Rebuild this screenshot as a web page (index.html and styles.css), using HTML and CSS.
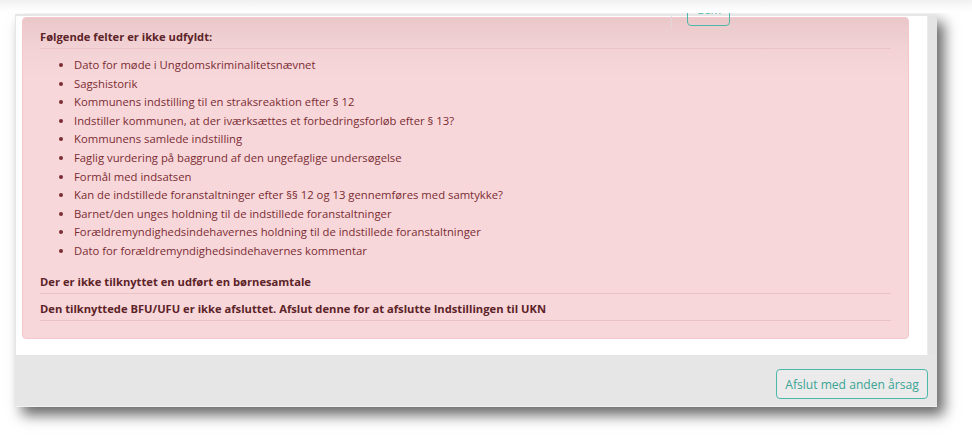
FILE: index.html
```html
<!DOCTYPE html>
<html lang="da">
<head>
<meta charset="utf-8">
<title>Indstilling til UKN</title>
<link rel="stylesheet" href="styles.css">
</head>
<body>
<div class="stage">
  <div class="window">
    <div class="content">
      <div class="main">
        <div class="cutoff">
          <span class="cut-label">Gældende</span>
          <span class="cut-divider"></span>
          <span class="cut-button">Gem</span>
        </div>
        <div class="alert">
          <div class="alert-title">Følgende felter er ikke udfyldt:</div>
          <ul class="missing">
            <li>Dato for møde i Ungdomskriminalitetsnævnet</li>
            <li>Sagshistorik</li>
            <li>Kommunens indstilling til en straksreaktion efter § 12</li>
            <li>Indstiller kommunen, at der iværksættes et forbedringsforløb efter § 13?</li>
            <li>Kommunens samlede indstilling</li>
            <li>Faglig vurdering på baggrund af den ungefaglige undersøgelse</li>
            <li>Formål med indsatsen</li>
            <li>Kan de indstillede foranstaltninger efter §§ 12 og 13 gennemføres med samtykke?</li>
            <li>Barnet/den unges holdning til de indstillede foranstaltninger</li>
            <li>Forældremyndighedsindehavernes holdning til de indstillede foranstaltninger</li>
            <li>Dato for forældremyndighedsindehavernes kommentar</li>
          </ul>
          <div class="alert-title gap">Der er ikke tilknyttet en udført en børnesamtale</div>
          <div class="alert-title tight">Den tilknyttede BFU/UFU er ikke afsluttet. Afslut denne for at afslutte Indstillingen til UKN</div>
        </div>
      </div>
      <div class="scrollbar"></div>
    </div>
    <div class="footer">
      <button class="btn-outline" type="button">Afslut med anden årsag</button>
    </div>
  </div>
</div>
<div class="top-fade"></div>
</body>
</html>
```
FILE: styles.css
```css
html, body {
  margin: 0;
  padding: 0;
  background: #ffffff;
}

body {
  position: relative;
  font-family: "Open Sans", "Liberation Sans", sans-serif;
  width: 972px;
  height: 443px;
  overflow: hidden;
}

.top-fade {
  position: absolute;
  top: 0;
  left: 0;
  width: 972px;
  height: 13px;
  background: linear-gradient(to bottom, #f1f1f1 0px, #fbfbfb 8px, #ffffff 13px);
  z-index: 10;
}

.stage {
  padding: 14px 0 0 15px;
}

.window {
  width: 922px;
  height: 393px;
  display: flex;
  flex-direction: column;
  border-top: 2px solid #e6e6e6;
  border-left: 1px solid #e6e6e6;
  box-sizing: border-box;
  box-shadow: 7px 8px 13px rgba(0, 0, 0, 0.6);
}

.content {
  display: flex;
  height: 339px;
}

.main {
  position: relative;
  flex: 1;
  background: #ffffff;
  padding: 1px 18px 0 6px;
}

.scrollbar {
  width: 9px;
  background: #e4e4e4;
  border-left: 1px solid #ececec;
}

.alert {
  height: 322px;
  box-sizing: border-box;
  padding: 10px 17px 0 17px;
  background: linear-gradient(to bottom, #eac8ca 0px, #f2d2d5 30px, #f8d7da 60px);
  border: 1px solid #f3c7cb;
  border-radius: 4px;
  color: #6e2027;
  font-size: 11.3px;
}

.alert-title {
  font-weight: 700;
  font-size: 11.2px;
  line-height: 18px;
  padding-bottom: 2px;
  border-bottom: 1px solid #e9c3c6;
  color: #5c2328;
}

.alert-title.gap {
  margin-top: 12px;
}

.alert-title.tight {
  margin-top: 6px;
}

.missing {
  margin: 7px 0 0 0;
  padding: 0 0 0 34px;
  line-height: 18.6px;
  color: #7a2c33;
}

.cutoff {
  position: absolute;
  top: 0;
  left: 0;
  right: 0;
  height: 0;
  z-index: 2;
}

.cut-label {
  position: absolute;
  left: 506px;
  top: -14px;
  font-size: 12px;
  line-height: 14px;
  color: #555555;
  white-space: nowrap;
}

.cut-divider {
  position: absolute;
  left: 655px;
  top: 0;
  width: 1px;
  height: 12px;
  background: #e2d6d7;
}

.cut-button {
  position: absolute;
  left: 671px;
  top: -21px;
  width: 43px;
  height: 31px;
  border: 1.5px solid #4db8a8;
  border-radius: 4px;
  color: #4db8a8;
  font-size: 11.5px;
  line-height: 28px;
  text-align: center;
  box-sizing: border-box;
  background: transparent;
}

.footer {
  flex: 1;
  background: #e6e6e6;
  border-bottom: 1px solid #f2f2f2;
  display: flex;
  justify-content: flex-end;
  align-items: flex-end;
  padding: 0 9px 7px 0;
}

.btn-outline {
  width: 152px;
  height: 30px;
  border: 1.5px solid #4ab9a7;
  border-radius: 4px;
  background: #ebebeb;
  color: #3aa595;
  font-family: "Open Sans", "Liberation Sans", sans-serif;
  font-size: 12.1px;
  padding: 0;
}
```
